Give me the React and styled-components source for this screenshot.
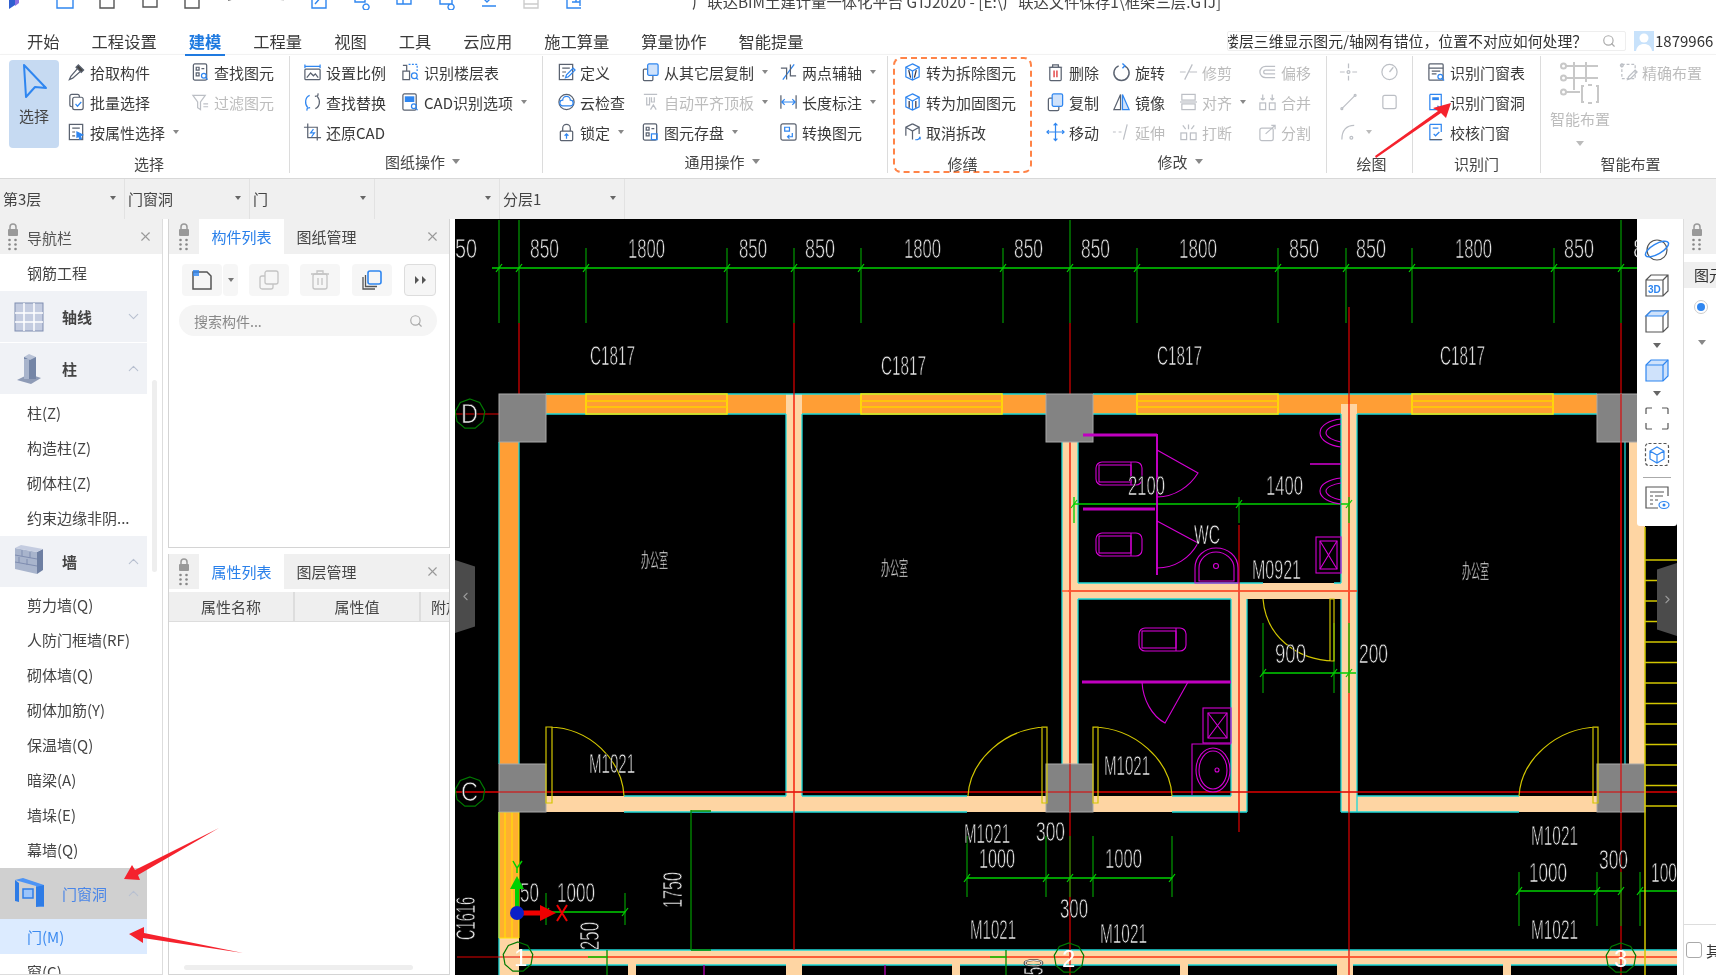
import React from 'react';
import styled, { createGlobalStyle } from 'styled-components';
import { X, ChevronDown, ChevronUp, ChevronLeft, ChevronRight, Search } from 'lucide-react';

const FONT = '"Noto Sans CJK SC", "Liberation Sans", sans-serif';
const BLUE = '#2f86f0';
const B = BLUE;

const Global = createGlobalStyle`
  html, body { margin: 0; padding: 0; background: #fff; }
  body { font-family: ${FONT}; font-size: 15px; color: #333; }
`;

const Page = styled.div`
  position: relative; width: 1716px; height: 979px; overflow: hidden; background: #fff; filter: blur(.3px);
`;

/* ---------- title bar ---------- */
const TitleBar = styled.div`
  display: flex; height: 28px; overflow: hidden; align-items: flex-start;
`;
const Logo = styled.svg`width: 12px; height: 20px; margin: -10px 0 0 8px;`;
const QuickBar = styled.div`display: flex; gap: 22.4px; margin-left: 35px; width: 637px;`;
const QuickIcon = styled.svg`
  width: 20px; height: 20px; margin-top: -10px; fill: none;
  stroke: ${p => (p.$muted ? '#ccc' : p.$blue ? BLUE : '#555')}; stroke-width: 1.4;
`;
const TitleText = styled.div`
  margin-top: -9px; font-size: 15.35px; line-height: 20px; white-space: nowrap; color: #444;
`;

/* ---------- tabs ---------- */
const TabRow = styled.div`display: flex; height: 26px; padding-left: 27px; align-items: center; position: relative;`;
const TabList = styled.div`display: flex; gap: 32px; width: 1200px;`;
const Tab = styled.div`
  position: relative; font-size: 16.3px; line-height: 22px; white-space: nowrap;
  color: ${p => (p.$active ? '#1f7ae0' : '#3a3a3a')};
  font-weight: ${p => (p.$active ? 700 : 400)};
  &::after {
    content: ''; display: ${p => (p.$active ? 'block' : 'none')};
    position: absolute; left: -4px; right: -4px; bottom: -4px; height: 2.5px; background: #1f7ae0;
  }
`;
const HelpSearch = styled.div`
  display: flex; align-items: center; width: 399px; height: 20px; overflow: hidden;
  box-sizing: border-box; border: 1px solid #eee; border-radius: 2px; flex: none;
`;
const HelpText = styled.span`
  margin-left: -4px; white-space: nowrap; font-size: 14.9px; line-height: 18px; color: #333; flex: none;
`;
const HelpIcon = styled(Search)`margin-left: 15px; flex: none; color: #aaa;`;
const Avatar = styled.div`
  width: 20px; height: 20px; margin-left: 8px; background: #c8e2fb; flex: none; overflow: hidden;
`;
const UserId = styled.span`white-space: nowrap; font-size: 15px; line-height: 20px; margin-left: 1px; flex: none;`;

/* ---------- ribbon ---------- */
const Ribbon = styled.div`
  display: flex; height: 125px; box-sizing: border-box; border-top: 1px solid #f2f2f2;
  border-bottom: 1px solid #d8d8d8; box-shadow: 0 1px 2px rgba(0,0,0,.06);
`;
const Group = styled.div`
  display: flex; flex-direction: column; box-sizing: border-box; flex: none;
  width: ${p => p.$w}px; height: 117px; margin-top: 1px; padding: 1px 0 0 ${p => p.$pad || 0}px;
  border-right: ${p => (p.$sep ? '1px solid #dcdcdc' : 'none')};
`;
const RepairFrame = styled.div`
  display: flex; flex-direction: column; box-sizing: border-box; flex: none;
  width: 139px; height: 116px; margin: 2px 9px 0 5px; padding: 0 0 0 8px;
  border: 2px dashed #ff8347; border-radius: 8px;
`;
const GroupBody = styled.div`display: flex; height: 92px; flex: none; margin-top: ${p => p.$lift || 0}px;`;
const Col = styled.div`
  display: grid; grid-template-rows: repeat(3, 30.2px); width: ${p => p.$w}px; flex: none;
`;
const Item = styled.div`
  display: flex; align-items: center; gap: 4px; white-space: nowrap; font-size: 15px;
  color: ${p => (p.$muted ? '#bcbcbc' : '#3a3a3a')};
`;
const Glyph = styled.svg`
  width: 19px; height: 20px; flex: none; fill: none; stroke-width: 1.3;
  stroke: #5a6270; opacity: ${p => (p.$muted ? 0.4 : 1)};
`;
const Caret = styled.i`
  display: inline-block; width: 0; height: 0; flex: none;
  margin-left: ${p => (p.$m === undefined ? 4 : p.$m)}px;
  border-left: ${p => p.$s || 3}px solid transparent; border-right: ${p => p.$s || 3}px solid transparent;
  border-top: ${p => (p.$s || 3) + 1}px solid ${p => p.$c || '#888'};
`;
const GroupLabel = styled.div`
  display: flex; align-items: center; justify-content: center; height: 24px; flex: none;
  font-size: 15px; color: #444; margin-left: ${p => p.$shift || 0}px; margin-top: ${p => (p.$low ? 2 : 0)}px;
`;
const BigButton = styled.div`
  display: flex; flex-direction: column; align-items: center; box-sizing: border-box;
  width: 50px; height: 88px; margin: 3px 8px 0 0; padding-top: 3px; border-radius: 4px;
  background: #c6daf2; font-size: 15px; color: #444; flex: none;
`;
const BigArrow = styled.svg`width: 28px; height: 36px; margin-bottom: 6px;`;
const SmartBig = styled.div`
  display: flex; flex-direction: column; align-items: center; width: 62px; margin-right: 8px;
  color: #bcbcbc; font-size: 15px; flex: none; padding-top: 5px;
`;
const SmartIcon = styled.svg`width: 40px; height: 42px; fill: none; stroke: #c8c8c8; stroke-width: 2; margin-bottom: 4px;`;
const SmartCaret = styled(Caret)`margin-top: 12px;`;

/* ---------- selects ---------- */
const SelectBar = styled.div`display: flex; height: 40px; background: #f0f0f0;`;
const SelectCell = styled.div`
  display: flex; align-items: center; box-sizing: border-box;
  width: 125px; padding: 0 8px 2px 3px; border-right: 1px solid #e2e2e2; font-size: 15px; color: #444;
`;
const SelectCaret = styled(Caret)`margin-left: auto;`;

/* ---------- workspace ---------- */
const Workspace = styled.div`display: flex; height: 756px;`;
const NavPanel = styled.div`
  position: relative; flex: none; width: 163px; box-sizing: border-box; overflow: hidden;
  border-right: 1.5px solid #ddd; border-bottom: 1.5px solid #ddd; margin-right: 5px;
`;
const PanelHead = styled.div`
  display: flex; align-items: stretch; height: 35px; background: #f0f0f0; flex: none; position: relative;
`;
const LockCell = styled.div`
  width: ${p => p.$w || 30}px; flex: none; display: flex; justify-content: center; align-items: center;
`;
const LockSvg = styled.svg`width: 12px; height: 29px;`;
const NavTitle = styled.div`line-height: 37px; font-size: 15px; color: #555; margin-left: 1px;`;
const HeadTab = styled.div`
  width: ${p => p.$w}px; flex: none; text-align: center; line-height: 36px; font-size: 15px;
  background: ${p => (p.$active ? '#fff' : 'transparent')};
  color: ${p => (p.$active ? '#2a80ea' : '#444')};
`;
const CloseBtn = styled(X)`margin: 10px 9px 0 auto; color: #999; flex: none;`;
const PlainRow = styled.div`
  display: flex; align-items: center; height: ${p => p.$h || 35}px; padding-left: 27px; width: 147px;
  box-sizing: border-box; font-size: 15px; white-space: nowrap; color: ${p => (p.$sel ? '#3d8bf0' : '#444')};
  background: ${p => (p.$sel ? '#dcebff' : 'transparent')};
`;
const Section = styled.div`
  display: flex; align-items: center; width: 147px; height: 51px; box-sizing: border-box; padding-left: 14px;
  background: ${p => (p.$on ? '#d0d0d0' : '#f0f2f6')}; margin-top: ${p => p.$mt || 0}px; margin-bottom: ${p => p.$mb || 0}px;
  font-size: 15px; font-weight: ${p => (p.$on ? 400 : 700)}; color: ${p => (p.$on ? '#4a86e8' : '#444')};
`;
const SectionIcon = styled.svg`width: 30px; height: 32px; margin-right: 18px; flex: none;`;
const Chevron = styled.span`margin-left: auto; margin-right: 5px; display: flex; color: #b8c0d0;`;
const ScrollThumb = styled.div`
  position: absolute; left: 152px; top: 161px; width: 5px; height: 192px; border-radius: 3px; background: #eee;
`;
const MidColumn = styled.div`display: flex; flex-direction: column; gap: 6px; width: 282px; flex: none; margin-right: 5px;`;
const DockPanel = styled.div`
  position: relative; display: flex; flex-direction: column; box-sizing: border-box; overflow: hidden;
  height: ${p => p.$h}px; border: 1px solid #d4d4d4; border-top: none;
`;
const Toolbar = styled.div`display: flex; padding: 10px 0 0 13px; height: 41px; box-sizing: content-box;`;
const ToolBtn = styled.div`
  display: flex; align-items: center; justify-content: center; width: ${p => p.$w || 40}px; height: 32px;
  margin-left: ${p => p.$m || 0}px; background: #f6f6f6; border-radius: 4px; box-sizing: border-box;
  border: ${p => (p.$border ? '1px solid #ddd' : 'none')};
`;
const ToolGlyph = styled.svg`width: 22px; height: 22px; fill: none; stroke: ${p => (p.$muted ? '#c4c4c4' : '#555')}; stroke-width: 1.3;`;
const ComponentSearch = styled.div`
  display: flex; align-items: center; justify-content: space-between; box-sizing: border-box;
  width: 258px; height: 31px; margin: 0 0 0 10px; padding: 0 14px 0 15px; border-radius: 16px;
  background: #f5f5f5; color: #888; font-size: 14px;
`;
const SearchGlyph = styled(Search)`color: #aaa;`;
const TableHead = styled.div`
  display: grid; grid-template-columns: 126px 126px 1fr; height: 29px; margin-top: 3px;
  background: #efefef; border-bottom: 1px solid #ddd; font-size: 15px; color: #444;
`;
const HeadCell = styled.div`
  line-height: 29px; text-align: center; border-right: 2px solid #ddd; overflow: hidden; white-space: nowrap;
  &:last-child { border-right: none; text-align: left; padding-left: 10px; }
`;
const HScroll = styled.div`
  position: absolute; left: 15px; bottom: 4px; width: 229px; height: 5px; border-radius: 3px; background: #eee;
`;

/* ---------- canvas ---------- */
const CanvasWrap = styled.div`position: relative; width: 1222px; height: 756px; flex: none; overflow: hidden; background: #000;`;
const Drawing = styled.svg`
  display: block;
  text { font-family: "Liberation Sans", sans-serif; font-size: 28px; fill: #e8e8e8; stroke: #000; stroke-width: .75; }
  .room { font-family: ${FONT}; font-size: 20px; stroke-width: .5; }
  .num { fill: #fff; stroke: none; font-size: 24px; }
`;
const SideTools = styled.div`
  position: absolute; right: 0; top: 0; width: 40px; height: 307px; background: #fff; border-radius: 0 0 3px 3px;
  display: flex; flex-direction: column; align-items: center; padding-top: 18px; box-sizing: border-box;
`;
const SideGlyph = styled.svg`
  width: 26px; height: 25px; flex: none; margin-bottom: ${p => p.$mb || 0}px; fill: none; stroke: #555; stroke-width: 1.2;
`;
const SideCaret = styled(Caret)`margin: ${p => p.$mt}px 0 ${p => p.$mb}px 0;`;
const SideRule = styled.div`width: 28px; height: 1px; background: #aaa; margin-bottom: 7px; flex: none;`;
const Handle = styled.div`
  position: absolute; top: ${p => p.$top}px; ${p => p.$side}: 0; width: 20px; height: 73px;
  background: #4b4b4b; color: #999; display: flex; align-items: center; justify-content: center;
  clip-path: ${p => (p.$side === 'left'
    ? 'polygon(0 0, 100% 9%, 100% 91%, 0 100%)'
    : 'polygon(0 9%, 100% 0, 100% 100%, 0 91%)')};
`;

/* ---------- right panel ---------- */
const RightPanel = styled.div`
  display: flex; flex-direction: column; position: relative; margin-left: 6px; flex: 1; overflow: hidden;
  border-left: 1.5px solid #ddd;
`;
const RightTab = styled.div`
  height: 26px; margin-top: 8px; background: #efefef; font-size: 15px; line-height: 26px; padding-left: 10px; white-space: nowrap;
`;
const Radio = styled.div`
  width: 14px; height: 14px; border: 1.5px solid #ccc; border-radius: 50%; margin: 12px 0 0 10px;
  display: flex; align-items: center; justify-content: center; box-sizing: border-box;
  &::after { content: ''; width: 8px; height: 8px; border-radius: 50%; background: ${BLUE}; }
`;
const RightCaret = styled(Caret)`margin: 26px 0 0 14px;`;
const RightFoot = styled.div`
  display: flex; align-items: center; margin-top: auto; height: 50px; border-top: 1.5px solid #ddd; padding-left: 2px; margin-bottom: 0;
  font-size: 15px; white-space: nowrap;
`;
const Check = styled.div`width: 16px; height: 16px; border: 1.5px solid #aaa; border-radius: 3px; margin-right: 4px; flex: none; box-sizing: border-box;`;

const AnnotationLayer = styled.svg`position: absolute; left: 0; top: 0; width: 1716px; height: 979px; pointer-events: none;`;

/* ---------- ribbon glyphs ---------- */
const ICONS = {
  pick: <><path d="M12 2.5l5.5 5.5-2.5 2.5L9.500 5z" fill="#444" /><path d="M11 6.500L4 14.500l-1.500 3.500 3.500-1.500 8-7" /></>,
  batch: <><rect x="3" y="2" width="10" height="13" rx="2" /><rect x="6" y="5" width="11" height="13" rx="2" fill="#fff" /><path stroke={B} d="M9 12l2 2.500 4-4.500" /></>,
  attr: <><rect x="2.500" y="2" width="14" height="16" /><path d="M5.500 6h8M5.500 10h3M5.500 14h3" /><path fill={B} stroke={B} d="M10.500 10l6 3-2.500 1 1 3-1.500 .5-1-3-2 1z" /></>,
  find: <><rect x="2.500" y="1.500" width="14" height="17" rx="1.500" /><path d="M5.500 5h3v3h-3zM11 6.500h3M5.500 11h3v3h-3z" /><circle cx="13.500" cy="14" r="2.500" stroke={B} /><path stroke={B} d="M15.500 16l2 2" /></>,
  filter: <><path d="M2 3h13l-5 7v8l-3-2v-6z" /><path d="M13 12h5M13 15h5" /></>,
  scale: <><path stroke={B} d="M2 2v4M18 2v4M2 4h16" /><rect x="2" y="7" width="16" height="11" rx="1" /><path d="M4 16l4-5 3 3 2-2 3 4" /></>,
  floor: <><path stroke={B} d="M8 2h9v7" strokeDasharray="2 1.500" /><path d="M2 9h7v9H2zM2 3h4v6" /><circle cx="14" cy="14" r="3" stroke={B} /><path stroke={B} d="M16 16l2 2" /></>,
  swap: <><path stroke={B} d="M7 3C2 5 1.500 12 5 16" /><path d="M13 17c5-2 5.500-9 2-13" /><path stroke={B} d="M7.500 16l-3 .5L4 19" /><path d="M12.500 4l3-.5L16 1" /></>,
  cad: <><rect x="2" y="1.500" width="14" height="17" rx="1.500" /><rect x="4" y="4" width="10" height="6" fill={B} stroke="none" /><circle cx="13.500" cy="14.500" r="2.500" stroke={B} /><path stroke={B} d="M15.500 16.500l2 2" /></>,
  restore: <><path d="M5 1v15h14M1 5h14v14" /><path stroke={B} d="M11 7l-3 4h4l-3 4" /></>,
  define: <><rect x="2.500" y="2" width="14" height="16" /><path d="M5.500 6h8M5.500 10h4M5.500 14h2" /><path stroke={B} d="M9 16l1-3 7-7 2 2-7 7z" /></>,
  cloud: <><circle cx="10" cy="10" r="8" /><path stroke={B} d="M6 14a3 3 0 0 1 0-6 4 4 0 0 1 8 0 3 3 0 0 1 0 6z" /></>,
  lock: <><path d="M6 9V6a4 4 0 0 1 8 0v3" /><rect x="3.500" y="9" width="13" height="10" rx="1" /><path stroke={B} d="M10 17v-5M8 14l2-2 2 2" /></>,
  copyFloor: <><rect x="2.500" y="7" width="10" height="12" rx="1" /><rect x="7" y="1.500" width="11" height="12" rx="1.500" fill="#cfe2fb" stroke={B} /></>,
  auto: <><path d="M3 2h14M6 5v8h3V5M11 5v5h3V5M10 18l3-5 3 5" /></>,
  store: <><rect x="2.500" y="1.500" width="14" height="17" rx="1.500" /><path d="M5.500 5h3v3h-3zM11 6.500h3M5.500 11h3v3h-3z" /><rect x="11" y="12" width="6" height="6" stroke={B} /></>,
  twoPoint: <><path stroke={B} d="M4 18L16 2" /><path d="M2 6h6v12M12 2v12h6" /></>,
  length: <><path d="M2 3v14M18 3v14" /><path stroke={B} d="M3 10h14M6 7l-3 3 3 3M14 7l3 3-3 3" /></>,
  convert: <><rect x="2" y="1.500" width="16" height="17" rx="2" /><path stroke={B} d="M6 5h5v4H6zM14 11v4H9M11 13l-2 2 2 2" /></>,
  demolish: <><path d="M10 1.500l7 3.500v10l-7 3.500L3 15V5z" stroke={B} /><path stroke={B} d="M3 5l7 4 7-4M10 9v9.500" /><path stroke="#334" d="M6 8l2 8M14 8l-2 8" /></>,
  reinforce: <><path d="M10 1.500l7 3.500v10l-7 3.500L3 15V5z" stroke={B} /><path stroke={B} d="M3 5l7 4 7-4M10 9v9.500" /><path stroke="#334" d="M6.500 9v7M13.500 9v7" /></>,
  cancel: <><path d="M10 1.500l7 3.500v7M3 14V5l7-3.500M3 5l7 4 7-4M10 9v9" /><path stroke={B} d="M13 18a4 4 0 0 0 5-3M18 15l0 3" /></>,
  del: <><path d="M3 5h14M7 5V2.500h6V5" /><rect x="4" y="5" width="12" height="14" rx="1" /><path stroke="#e34242" strokeWidth="1.5" d="M8.500 8.500v7M11.500 8.500v7" /></>,
  rotate: <><path d="M13 3.500a8 8 0 1 1-6 0" strokeWidth="1.500" /><path stroke={B} strokeWidth="1.500" d="M11 1l2.500 2.500L11 6" /></>,
  copy: <><rect x="2.500" y="6" width="11" height="13" rx="1.500" /><rect x="6.500" y="1.500" width="11" height="13" rx="1.500" fill="#cfe2fb" stroke={B} /></>,
  mirror: <><path d="M9 2L2 18h7z" /><path d="M11 2l7 16h-7z" stroke={B} fill="#cfe2fb" /></>,
  move: <><path stroke={B} d="M10 1v18M1 10h18M8 3l2-2 2 2M8 17l2 2 2-2M3 8l-2 2 2 2M17 8l2 2-2 2" /></>,
  trim: <><path d="M14 2L6 18M1 10h6M11 10h8" /></>,
  offset: <><path d="M18 4H8a6 6 0 0 0 0 12h10M18 8H8a2 2 0 0 0 0 4h10" /></>,
  extend: <><path d="M1 10h3M7 10h3M16 2l-4 16" /></>,
  align: <><rect x="3" y="2" width="14" height="6" /><rect x="3" y="12" width="14" height="6" /><path d="M1 10h18" /></>,
  merge: <><rect x="2" y="11" width="6" height="7" /><rect x="12" y="11" width="6" height="7" /><path d="M5 2v6M15 2v6M5 8l-2-2M5 8l2-2M15 8l-2-2M15 8l2-2" /></>,
  breakIt: <><rect x="2" y="11" width="6" height="7" /><rect x="12" y="11" width="6" height="7" /><path d="M4 3l3 4M16 3l-3 4M10 2v5" /></>,
  split: <><rect x="2" y="6" width="14" height="13" rx="2" /><path d="M8 12l10-9M14 3h4v4" /></>,
  point: <><path d="M10 1v5M10 14v5M1 10h5M14 10h5" /><circle cx="10" cy="10" r="1.500" /></>,
  dial: <><circle cx="10" cy="10" r="8" /><path d="M10 10l4-5" /></>,
  line: <><path d="M3 17L17 3" /><circle cx="3" cy="17" r="1" /><circle cx="17" cy="3" r="1" /></>,
  square: <><rect x="3" y="3" width="14" height="14" rx="2" /></>,
  arc: <><path d="M3 18C3 8 8 3 16 3" /><circle cx="13" cy="16" r="1.500" /></>,
  recTable: <><rect x="2" y="1.500" width="15" height="17" rx="1" /><path d="M2 6h15M5 9h9M5 12h5" /><circle cx="14" cy="15" r="2.500" stroke={B} /><path stroke={B} d="M16 17l2 2" /></>,
  recDoor: <><path d="M3 2h12v14M3 2v16h10" stroke={B} /><rect x="5.500" y="5" width="7" height="3" fill={B} stroke="none" /><path stroke={B} d="M11 14l2 2" /></>,
  check: <><path d="M3 2h12v8M3 2v16h12" stroke={B} /><path d="M3 18h13" /><path stroke={B} d="M6 6h6M7 12l2 2 4-4" /></>,
  precise: <><rect x="3" y="2" width="14" height="15" strokeDasharray="3 2" /><circle cx="3" cy="3" r="1.500" /><path d="M9 18l1-3 7-7 2 2-7 7z" /></>,
};

const Ico = ({ n, muted }) => <Glyph viewBox="0 0 20 20" $muted={muted}>{ICONS[n]}</Glyph>;
const Cmd = ({ n, t, muted, caret }) => (
  <Item $muted={muted}><Ico n={n} muted={muted} />{t}{caret && <Caret />}</Item>
);

const BareIcon = ({ n, caret }) => <Item $muted><Ico n={n} muted />{caret && <Caret $c="#bbb" />}</Item>;

const Grip = () => (
  <LockSvg viewBox="0 0 12 29">
    <path d="M3 8V5a3 3 0 0 1 6 0v3" fill="none" stroke="#999" strokeWidth="1.500" />
    <rect x="1" y="7" width="10" height="7" rx="1" fill="#999" />
    <g fill="#888">
      {[18, 22.500, 27].map(y => [2.500, 8.500].map(x => <circle key={x + '-' + y} cx={x} cy={y} r="1.300" />))}
    </g>
  </LockSvg>
);

const QUICK = [
  ['M2 2h16v16H2z', 1], ['M3 2h14v16H3z'], ['M3 5l4-3h10v15H3z'], ['M3 2h14v16H3zM6 2v5h8V2'],
  ['M3 10c4 0 8-3 12-8M15 2v5'], ['M17 10c-4 0-8-3-12-8M5 2v5', 0, 1], ['M3 2h14v16H3zM6 14l7-8', 1], ['M3 2h10v10H3zM14 14a3 3 0 1 0 .1 0', 1],
  ['M3 2h6v12H3zM9 6h8v8H9z', 1], ['M3 2h12v12H3zM14 14a3 3 0 1 0 .1 0', 1], ['M3 16h14M6 10l8-8 2 2-8 8z', 1], ['M3 2h14v16H3zM3 8h14M3 14h14', 0, 1], ['M3 2v16h14M8 8h8v8M12 4v8M8 12h8', 1],
];

const SectionIcons = {
  grid: <><rect x="1" y="2" width="28" height="28" fill="#c4cce0" stroke="#7f8db0" /><path d="M10 2v28M20 2v28M1 12h28M1 21h28" stroke="#fff" strokeWidth="1.500" /></>,
  col: <><path d="M3 27l12-6 12 4-10 6z" fill="#8e9bb6" /><rect x="10" y="4" width="12" height="22" fill="#7485a6" /><path d="M10 4l5-3 7 3-6 3z" fill="#b8c2d6" /><rect x="10" y="6" width="5" height="20" fill="#a8b4cc" /></>,
  wall: <><path d="M1 3l22 4v22L1 24z" fill="#a8b4cc" /><path d="M23 7l6-3v21l-6 4z" fill="#6e7fa2" /><path d="M1 3l6-3 22 4-6 3z" fill="#c4cce0" /><path d="M1 10l22 4M1 17l22 4M8 5v6M16 7v6M5 12v6M13 14v6" stroke="#7f8db0" /></>,
  door: <><path d="M1 3l8-2 21 7v22l-8-1V9z" fill="#4d94f5" /><path d="M5 6v19l-4-1V3zM22 10v20l8-1V8z" fill="#2e7ce6" /><rect x="9" y="12" width="10" height="9" fill="#9ac4fb" stroke="#2e7ce6" strokeWidth="1.500" /></>,
};

/* ---------- drawing data ---------- */
const ORANGE = '#ff9e35', PEACH = '#fed5a3', CYAN = '#1cd8d8', RED = '#e00000', LIME = '#00d000', DK = '#008f00', YEL = '#ffe600', DOOR = '#d2c600', MAG = '#d400d4';

const FILLS = [
  [546, 394, 500, 20, ORANGE], [1093, 394, 504, 20, ORANGE], [499, 442, 20, 322, ORANGE], [499, 812, 20, 126, '#ffb030'],
  [499, 938, 20, 37, PEACH], [786, 394, 16, 402, PEACH], [1062, 442, 16, 322, PEACH], [1341, 404, 16, 408, PEACH],
  [1062, 583, 295, 16, PEACH], [1231, 599, 16, 213, PEACH], [546, 796, 500, 16, PEACH], [1093, 796, 154, 16, PEACH],
  [1341, 796, 256, 16, PEACH], [1629, 442, 16, 322, PEACH], [519, 950, 1158, 15, PEACH], [628, 965, 8, 10, PEACH],
  [786, 965, 16, 10, PEACH], [952, 965, 8, 10, PEACH], [1180, 965, 8, 10, PEACH], [1337, 965, 16, 10, PEACH], [1503, 965, 8, 10, PEACH],
];
const COLUMNS = [[499, 394, 47, 48], [1046, 394, 47, 48], [1597, 394, 48, 48], [499, 764, 47, 48], [1046, 764, 47, 48], [1597, 764, 48, 48]];
const CYANS = [
  'M546 394H1046M1093 394H1597M546 414H786M802 414H1046M1093 414H1341M1357 414H1597', 'M499 442V764M519 442V764M786 414V796M802 414V796',
  'M1062 442V764M1078 442V583M1078 599V796M1341 414V583M1341 599V812M1357 414V812', 'M1078 583H1263M1334 583H1341M1078 599H1231M1231 599V796M1247 599V812',
  'M624 796H786M802 796H967M1172 796H1231M1357 796H1519M624 812H967M1172 812H1247M1341 812H1519', 'M1625 442V764M499 812V975',
  'M519 950H1677M519 965H628M636 965H786M802 965H952M960 965H1180M1188 965H1337M1353 965H1503M1511 965H1677',
];
const REDS = ['M519 323V394M794 323V950M1070 323V394M1349 307V975M1621 323V975M1239 525V832M1070 812V975', 'M455 414H499M455 792H1677M457 957H1677M1068 591H1357', 'M1070 442V764'];
const TICKS = [586, 727, 794, 861, 1003, 1137, 1278, 1346, 1412, 1554];
const DIMS_DK = [
  'M691 810V950M691 811H711M691 950H711M546 893V925M625 893V925M1239 497V523M1263 623V693M1334 623V693', 'M967 836V897M1046 836V897M1070 836V897M1093 836V897M1172 836V897',
  'M1519 872V926M1597 872V926M1621 872V926M1640 872V926', 'M607 950V975M1006 950V975',
];
const DIMS_LT = [
  'M492 268H1637', 'M546 912H625', 'M967 878H1172', 'M1519 891H1621M1640 891H1677', 'M1074 504H1349M1074 497V523M1349 497V523', 'M1263 673H1356M1349 623V693', 'M588 957H607M990 957H1006',
];
const SLASHES = [[499, 268], [519, 268], [586, 268], [727, 268], [794, 268], [861, 268], [1003, 268], [1070, 268], [1137, 268], [1278, 268], [1346, 268], [1412, 268], [1554, 268], [1621, 268], [546, 912], [625, 912], [967, 878], [1046, 878], [1070, 878], [1093, 878], [1172, 878], [1519, 891], [1597, 891], [1621, 891], [1640, 891], [1074, 504], [1239, 504], [1349, 504], [1263, 673], [1334, 673], [1349, 673]];
const LABELS = [
  ['50', 455, 477, 258], ['850', 530, 559, 258], ['1800', 628, 665, 258], ['850', 739, 767, 258], ['850', 805, 835, 258], ['1800', 904, 941, 258], ['850', 1014, 1043, 258],
  ['850', 1081, 1110, 258], ['1800', 1179, 1217, 258], ['850', 1289, 1319, 258], ['850', 1356, 1386, 258], ['1800', 1455, 1492, 258], ['850', 1564, 1594, 258], ['8', 1633, 1645, 258],
  ['C1817', 590, 635, 365], ['C1817', 881, 926, 375], ['C1817', 1157, 1202, 365], ['C1817', 1440, 1485, 365],
  ['2100', 1128, 1165, 495], ['1400', 1266, 1303, 495], ['WC', 1194, 1220, 544], ['M0921', 1252, 1301, 579], ['900', 1275, 1306, 663], ['200', 1359, 1388, 663],
  ['M1021', 589, 635, 773], ['M1021', 1104, 1150, 775], ['M1021', 964, 1010, 843], ['300', 1036, 1065, 841], ['1000', 979, 1015, 868], ['1000', 1105, 1142, 868], ['300', 1060, 1088, 918],
  ['M1021', 970, 1016, 939], ['M1021', 1100, 1147, 943], ['M1021', 1531, 1578, 845], ['1000', 1529, 1567, 882], ['300', 1599, 1628, 869], ['100', 1651, 1677, 882], ['M1021', 1531, 1578, 939],
  ['50', 520, 539, 902], ['1000', 557, 595, 902],
];
const VERTICALS = [['1750', 682, 908, 36], ['C1616', 475, 940, 43], ['250', 599, 950, 28], ['50', 1043, 975, 16]];
const ROOMS = [[641, 568], [881, 576], [1462, 579]];
const YELLOW_RUNGS = Array.from({ length: 13 }, (_, i) => 560 + i * 20.5);
const WINDOWS = [586, 861, 1137, 1412];

const Octagon = ({ cx, cy, r = 15 }) => {
  const pts = Array.from({ length: 9 }, (_, i) => {
    const a = (Math.PI * 2 * i) / 9 - Math.PI / 2;
    return `${cx + r * Math.cos(a)},${cy + r * Math.sin(a)}`;
  }).join(' ');
  return <polygon points={pts} fill="none" stroke="#007a00" strokeWidth="1.200" />;
};

const Plan = () => (
  <Drawing width="1222" height="756" viewBox="455 219 1222 756">
    {FILLS.map((f, i) => <rect key={i} x={f[0]} y={f[1]} width={f[2]} height={f[3]} fill={f[4]} />)}
    <path d={CYANS.join('')} stroke={CYAN} strokeWidth="1.300" fill="none" />
    {WINDOWS.map(x => (
      <g key={x} stroke={YEL} strokeWidth="1.500" fill="none">
        <rect x={x} y="394" width="141" height="20" />
        <path d={`M${x} 401H${x + 141}M${x} 407H${x + 141}`} stroke="#ffd000" />
      </g>
    ))}
    <path d="M499 812V938M505 812V938M512 812V938M519 812V938M499 812H519M499 938H519" stroke={YEL} strokeWidth="1" fill="none" />
    <path d={REDS.join('')} stroke={RED} strokeWidth="1.200" fill="none" />
    <path d="M794 396V796M1070 442V764M1349 404V812M1239 599V812" stroke="#ff4a2a" strokeWidth="1.200" fill="none" />
    <path d="M519 957H1677M1062 591H1357" stroke="#ff5a30" strokeWidth="1.300" fill="none" />
    {COLUMNS.map((c, i) => <rect key={i} x={c[0]} y={c[1]} width={c[2]} height={c[3]} fill="#838383" stroke="#a9a9a9" />)}
    <path d="M1621 394V812M1070 764V812M455 792H1677" stroke={RED} strokeWidth="1.100" fill="none" />

    {/* dimension lines */}
    <path d="M499 220V323M519 220V323M1070 220V323M1621 220V323" stroke={DK} strokeWidth="1.300" />
    {TICKS.map(x => <path key={x} d={`M${x} 248V323`} stroke={DK} strokeWidth="1.300" />)}
    <path d={DIMS_DK.join('')} stroke={DK} strokeWidth="1.300" fill="none" />
    <path d={DIMS_LT.join('')} stroke={LIME} strokeWidth="1.300" fill="none" />
    {SLASHES.map(([x, y], i) => <path key={i} d={`M${x - 3} ${y + 4}L${x + 3} ${y - 4}`} stroke={LIME} strokeWidth="1.200" />)}

    {/* doors */}
    <g fill="none" stroke={DOOR} strokeWidth="1.200">
      <path d="M546 727H552V803H546ZM549 727C590 728 622 760 624 796" />
      <path d="M1042 727H1047V803H1042ZM1047 727C1005 728 970 760 968 796" />
      <path d="M1093 727H1098V803H1093ZM1093 727C1135 728 1170 760 1172 796" />
      <path d="M1593 727H1598V803H1593ZM1598 727C1556 728 1521 760 1519 796" />
      <path d="M1330 599V661H1334V599ZM1334 661C1296 660 1266 636 1263 599" />
    </g>
    <path d="M1645 527V975" stroke={DOOR} strokeWidth="1.500" />
    {YELLOW_RUNGS.map(y => <path key={y} d={`M1645 ${y}H1677`} stroke={DOOR} strokeWidth="1.500" />)}

    {/* fixtures */}
    <g fill="none" stroke={MAG} strokeWidth="1.100">
      <path d="M1083 435H1157V575" strokeWidth="1.800" />
      <path d="M1083 435H1157M1083 509H1155M1082 682H1231" strokeWidth="3" stroke="#c000c0" />
      <path d="M1157 450L1198 473C1190 486 1175 497 1157 497M1157 521L1198 543C1190 558 1175 568 1157 568" />
      <rect x="1096" y="462" width="46" height="23" rx="6" /><rect x="1099" y="465" width="32" height="17" /><path d="M1131 462V485" />
      <rect x="1096" y="533" width="46" height="23" rx="6" /><rect x="1099" y="536" width="32" height="17" /><path d="M1131 533V556" />
      <rect x="1139" y="628" width="47" height="23" rx="6" /><rect x="1142" y="631" width="34" height="17" /><path d="M1176 628V651" />
      <path d="M1341 419C1330 420 1320 425 1320 433C1320 440 1330 446 1341 447M1341 424C1334 425 1326 428 1326 433C1326 437 1334 441 1341 442" />
      <path d="M1341 478C1330 479 1320 484 1320 491C1320 498 1330 503 1341 504M1341 483C1334 484 1326 487 1326 491C1326 495 1334 499 1341 500" />
      <path d="M1310 464H1341" strokeWidth="1.500" />
      <path d="M1195 583V568C1195 556 1205 548 1216 548C1228 548 1238 556 1238 568V583Z" /><path d="M1199 581V568C1199 559 1207 552 1216 552C1225 552 1234 559 1234 568V581Z" /><circle cx="1216" cy="566" r="2.500" />
      <rect x="1316" y="537" width="25" height="36" /><rect x="1320" y="541" width="17" height="28" /><path d="M1320 541L1337 569M1337 541L1320 569" />
      <path d="M1142 682C1143 700 1152 716 1165 723L1188 682" />
      <rect x="1203" y="708" width="28" height="35" /><rect x="1208" y="713" width="19" height="25" /><path d="M1208 713L1227 738M1227 713L1208 738" />
      <path d="M1192 795V744H1231" /><ellipse cx="1213" cy="770" rx="17" ry="22" /><ellipse cx="1213" cy="770" rx="14" ry="19" /><circle cx="1217" cy="770" r="2" />
      <path d="M704 965V975M885 965V975" stroke="#9a009a" strokeWidth="1.500" />
    </g>

    {/* axis bubbles */}
    <Octagon cx={470} cy={414} /><Octagon cx={470} cy={792} /><Octagon cx={518} cy={957} /><Octagon cx={1069} cy={958} /><Octagon cx={1621} cy={958} />
    <text x="461" y="423" textLength="17" lengthAdjust="spacingAndGlyphs">D</text>
    <text x="461" y="801" textLength="17" lengthAdjust="spacingAndGlyphs">C</text>
    <text className="num" x="514" y="966">1</text>
    <text className="num" x="1062" y="967">2</text>
    <text className="num" x="1614" y="967">3</text>

    {LABELS.map(([t, a, b, y], i) => <text key={i} x={a} y={y} textLength={b - a} lengthAdjust="spacingAndGlyphs">{t}</text>)}
    {VERTICALS.map(([t, x, y, l], i) => (
      <text key={i} transform={`translate(${x} ${y}) rotate(-90)`} textLength={l} lengthAdjust="spacingAndGlyphs">{t}</text>
    ))}
    {ROOMS.map(([x, y]) => <text key={x} className="room" x={x} y={y} textLength="27" lengthAdjust="spacingAndGlyphs">办公室</text>)}

    {/* UCS marker */}
    <path d="M517 913V885" stroke="#00d000" strokeWidth="4" /><path d="M510 889L517 876L524 889Z" fill="#00d000" />
    <path d="M517 913H545" stroke="#f00000" strokeWidth="5" /><path d="M540 905L556 913L540 921Z" fill="#f00000" />
    <circle cx="517" cy="913" r="7" fill="#0a1fc8" />
    <path d="M513 861L517 868L522 861M517 868V873" stroke="#00d000" strokeWidth="1.500" fill="none" />
    <path d="M557 905L567 921M567 905L557 921" stroke="#f00000" strokeWidth="2" />
  </Drawing>
);

const NavItems1 = ['柱(Z)', '构造柱(Z)', '砌体柱(Z)', '约束边缘非阴...'];
const NavItems2 = ['剪力墙(Q)', '人防门框墙(RF)', '砌体墙(Q)', '砌体加筋(Y)', '保温墙(Q)', '暗梁(A)', '墙垛(E)', '幕墙(Q)'];
const TABS = ['开始', '工程设置', '建模', '工程量', '视图', '工具', '云应用', '施工算量', '算量协作', '智能提量'];
const SELECTS = ['第3层', '门窗洞', '门', '', '分层1'];

const SectionRow = ({ icon, title, up, on, mb, mt }) => (
  <Section $on={on} $mb={mb} $mt={mt}>
    <SectionIcon viewBox="0 0 30 32">{SectionIcons[icon]}</SectionIcon>
    {title}
    <Chevron>{up ? <ChevronUp size={17} strokeWidth={1.500} /> : <ChevronDown size={17} strokeWidth={1.500} />}</Chevron>
  </Section>
);

export default function App() {
  return (
    <Page>
      <Global />
      <TitleBar>
        <Logo viewBox="0 0 12 20"><path d="M1 1h6v14L1 19z" fill="#2f5fd0" /><path d="M7 4h4v9l-4 3z" fill="#8b6fe0" /></Logo>
        <QuickBar>
          {QUICK.map(([d, blue, muted], i) => (
            <QuickIcon key={i} viewBox="0 0 20 20" $blue={blue} $muted={muted}><path d={d} /></QuickIcon>
          ))}
        </QuickBar>
        <TitleText>广联达BIM土建计量一体化平台 GTJ2020 - [E:\广联达文件保存1\框架三层.GTJ]</TitleText>
      </TitleBar>

      <TabRow>
        <TabList>{TABS.map(t => <Tab key={t} $active={t === '建模'}>{t}</Tab>)}</TabList>
        <HelpSearch>
          <HelpText>楼层三维显示图元/轴网有错位，位置不对应如何处理？</HelpText>
          <HelpIcon size={14} strokeWidth={2} />
        </HelpSearch>
        <Avatar>
          <svg viewBox="0 0 20 20" width="20" height="20"><circle cx="10" cy="7" r="4.500" fill="#fff" /><path d="M2 20c1-6 5-7 8-7s7 1 8 7z" fill="#fff" /></svg>
        </Avatar>
        <UserId>1879966</UserId>
      </TabRow>

      <Ribbon>
        <Group $w={290} $pad={9} $sep>
          <GroupBody>
            <BigButton>
              <BigArrow viewBox="0 0 28 36"><path d="M4 2L26 25L15 24L6 34Z" fill="none" stroke="#2f86f0" strokeWidth="2" strokeLinejoin="round" /></BigArrow>
              选择
            </BigButton>
            <Col $w={124}>
              <Cmd n="pick" t="拾取构件" /><Cmd n="batch" t="批量选择" /><Cmd n="attr" t="按属性选择" caret />
            </Col>
            <Col $w={95}>
              <Cmd n="find" t="查找图元" /><Cmd n="filter" t="过滤图元" muted />
            </Col>
          </GroupBody>
          <GroupLabel $low>选择</GroupLabel>
        </Group>

        <Group $w={253} $pad={13} $sep>
          <GroupBody>
            <Col $w={98}>
              <Cmd n="scale" t="设置比例" /><Cmd n="swap" t="查找替换" /><Cmd n="restore" t="还原CAD" />
            </Col>
            <Col $w={140}>
              <Cmd n="floor" t="识别楼层表" /><Cmd n="cad" t="CAD识别选项" caret />
            </Col>
          </GroupBody>
          <GroupLabel>图纸操作<Caret $m={7} $s={4} /></GroupLabel>
        </Group>

        <Group $w={345} $pad={14} $sep>
          <GroupBody>
            <Col $w={84}>
              <Cmd n="define" t="定义" /><Cmd n="cloud" t="云检查" /><Cmd n="lock" t="锁定" caret />
            </Col>
            <Col $w={138}>
              <Cmd n="copyFloor" t="从其它层复制" caret /><Cmd n="auto" t="自动平齐顶板" muted caret /><Cmd n="store" t="图元存盘" caret />
            </Col>
            <Col $w={105}>
              <Cmd n="twoPoint" t="两点辅轴" caret /><Cmd n="length" t="长度标注" caret /><Cmd n="convert" t="转换图元" />
            </Col>
          </GroupBody>
          <GroupLabel>通用操作<Caret $m={7} $s={4} /></GroupLabel>
        </Group>

        <RepairFrame>
          <GroupBody $lift={-2}>
            <Col $w={125}>
              <Cmd n="demolish" t="转为拆除图元" /><Cmd n="reinforce" t="转为加固图元" /><Cmd n="cancel" t="取消拆改" />
            </Col>
          </GroupBody>
          <GroupLabel $shift={-8} $low>修缮</GroupLabel>
        </RepairFrame>

        <Group $w={286} $pad={5} $sep>
          <GroupBody>
            <Col $w={66}><Cmd n="del" t="删除" /><Cmd n="copy" t="复制" /><Cmd n="move" t="移动" /></Col>
            <Col $w={67}><Cmd n="rotate" t="旋转" /><Cmd n="mirror" t="镜像" /><Cmd n="extend" t="延伸" muted /></Col>
            <Col $w={79}><Cmd n="trim" t="修剪" muted /><Cmd n="align" t="对齐" muted caret /><Cmd n="breakIt" t="打断" muted /></Col>
            <Col $w={65}><Cmd n="offset" t="偏移" muted /><Cmd n="merge" t="合并" muted /><Cmd n="split" t="分割" muted /></Col>
          </GroupBody>
          <GroupLabel $shift={-12}>修改<Caret $m={7} $s={4} /></GroupLabel>
        </Group>

        <Group $w={86} $pad={12} $sep>
          <GroupBody>
            <Col $w={41}><BareIcon n="point" /><BareIcon n="line" /><BareIcon n="arc" caret /></Col>
            <Col $w={30}><BareIcon n="dial" /><BareIcon n="square" /></Col>
          </GroupBody>
          <GroupLabel $shift={-8} $low>绘图</GroupLabel>
        </Group>

        <Group $w={128} $pad={14} $sep>
          <GroupBody>
            <Col $w={110}><Cmd n="recTable" t="识别门窗表" /><Cmd n="recDoor" t="识别门窗洞" /><Cmd n="check" t="校核门窗" /></Col>
          </GroupBody>
          <GroupLabel $shift={-14} $low>识别门</GroupLabel>
        </Group>

        <Group $w={175} $pad={8}>
          <GroupBody>
            <SmartBig>
              <SmartIcon viewBox="0 0 40 42">
                <path d="M14 0V28M26 0V20M6 4H38M6 16H38M6 30H20" /><circle cx="3.500" cy="4" r="2.500" /><circle cx="3.500" cy="16" r="2.500" /><circle cx="3.500" cy="30" r="2.500" />
                <path d="M24 24h-2v16h2M36 24h2v16h-2M28 23h4M28 41h4" />
              </SmartIcon>
              智能布置
              <SmartCaret $m={0} $s={4} $c="#bbb" />
            </SmartBig>
            <Col $w={95}><Cmd n="precise" t="精确布置" muted /></Col>
          </GroupBody>
          <GroupLabel $shift={-4} $low>智能布置</GroupLabel>
        </Group>
      </Ribbon>

      <SelectBar>
        {SELECTS.map((s, i) => <SelectCell key={i}>{s}<SelectCaret $c="#666" /></SelectCell>)}
      </SelectBar>

      <Workspace>
        <NavPanel>
          <PanelHead>
            <LockCell $w={26}><Grip /></LockCell>
            <NavTitle>导航栏</NavTitle>
            <CloseBtn size={15} strokeWidth={1.800} />
          </PanelHead>
          <PlainRow $h={37}>钢筋工程</PlainRow>
          <SectionRow icon="grid" title="轴线" mb={1} />
          <SectionRow icon="col" title="柱" up mb={0.500} />
          {NavItems1.map(t => <PlainRow key={t}>{t}</PlainRow>)}
          <SectionRow icon="wall" title="墙" up mt={1} />
          {NavItems2.map(t => <PlainRow key={t}>{t}</PlainRow>)}
          <SectionRow icon="door" title="门窗洞" up on mt={1} />
          <PlainRow $sel>门(M)</PlainRow>
          <PlainRow>窗(C)</PlainRow>
          <ScrollThumb />
        </NavPanel>

        <MidColumn>
          <DockPanel $h={329}>
            <PanelHead>
              <LockCell><Grip /></LockCell>
              <HeadTab $w={85} $active>构件列表</HeadTab>
              <HeadTab $w={85}>图纸管理</HeadTab>
              <CloseBtn size={15} strokeWidth={1.800} />
            </PanelHead>
            <Toolbar>
              <ToolBtn>
                <ToolGlyph viewBox="0 0 22 22"><path d="M2 3h14l4 4v13H2z" strokeWidth="1.500" /><rect x="2" y="1" width="6" height="6" fill={BLUE} stroke="none" opacity=".8" /></ToolGlyph>
              </ToolBtn>
              <ToolBtn $w={15} $m={1}><Caret $m={0} $c="#777" /></ToolBtn>
              <ToolBtn $m={11}>
                <ToolGlyph viewBox="0 0 22 22" $muted><rect x="2" y="7" width="13" height="13" rx="2" /><rect x="7" y="2" width="13" height="13" rx="2" fill="#f6f6f6" /></ToolGlyph>
              </ToolBtn>
              <ToolBtn $m={11}>
                <ToolGlyph viewBox="0 0 22 22" $muted><path d="M2 5h18M8 5V2h6v3" /><rect x="4" y="5" width="14" height="15" rx="2" /><path d="M9 9v7M13 9v7" /></ToolGlyph>
              </ToolBtn>
              <ToolBtn $m={12}>
                <ToolGlyph viewBox="0 0 22 22"><path d="M2 8v12h12M4.500 6v11.500H16" /><rect x="7" y="2" width="13" height="13" rx="2" stroke={BLUE} strokeWidth="1.600" /></ToolGlyph>
              </ToolBtn>
              <ToolBtn $w={32} $m={12} $border>
                <ToolGlyph viewBox="0 0 22 22"><path d="M6 7l4 4-4 4zM13 7l4 4-4 4z" fill="#555" stroke="none" /></ToolGlyph>
              </ToolBtn>
            </Toolbar>
            <ComponentSearch>搜索构件...<SearchGlyph size={14} strokeWidth={2} /></ComponentSearch>
          </DockPanel>
          <DockPanel $h={421}>
            <PanelHead>
              <LockCell><Grip /></LockCell>
              <HeadTab $w={85} $active>属性列表</HeadTab>
              <HeadTab $w={85}>图层管理</HeadTab>
              <CloseBtn size={15} strokeWidth={1.800} />
            </PanelHead>
            <TableHead>
              <HeadCell>属性名称</HeadCell><HeadCell>属性值</HeadCell><HeadCell>附加</HeadCell>
            </TableHead>
            <HScroll />
          </DockPanel>
        </MidColumn>

        <CanvasWrap>
          <Plan />
          <Handle $side="left" $top={341}><ChevronLeft size={13} /></Handle>
          <Handle $side="right" $top={344}><ChevronRight size={13} /></Handle>
          <SideTools>
            <SideGlyph viewBox="0 0 26 25" $mb={11}>
              <circle cx="13" cy="13" r="10" /><ellipse cx="13" cy="12" rx="13" ry="5" transform="rotate(-30 13 12)" stroke={BLUE} strokeWidth="1.500" />
            </SideGlyph>
            <SideGlyph viewBox="0 0 26 25" $mb={11}>
              <path d="M2 7l5-5h17v16l-5 5H2zM2 7h17v16M19 7l5-5" />
              <text x="4" y="20" fontSize="10" fontWeight="700" fill={BLUE} stroke="none" fontFamily="Liberation Sans">3D</text>
            </SideGlyph>
            <SideGlyph viewBox="0 0 26 25" $mb={0}>
              <path d="M2 7l5-5h17v16l-5 5H2zM19 7v16" /><path d="M2 7l5-5h17l-5 5z" fill="#cfe2fb" stroke={BLUE} />
            </SideGlyph>
            <SideCaret $mt={9} $mb={10} $m={0} $s={4} $c="#666" />
            <SideGlyph viewBox="0 0 26 25" $mb={0}>
              <path d="M2 7l5-5h17v16l-5 5H2z" fill="#cfe2fb" stroke={BLUE} /><path d="M2 7h17v16M19 7l5-5" stroke={BLUE} />
            </SideGlyph>
            <SideCaret $mt={8} $mb={10} $m={0} $s={4} $c="#666" />
            <SideGlyph viewBox="0 0 26 25" $mb={11}>
              <path d="M2 8V3a1 1 0 0 1 1-1h5M18 2h5a1 1 0 0 1 1 1v5M24 17v5a1 1 0 0 1-1 1h-5M8 23H3a1 1 0 0 1-1-1v-5" />
            </SideGlyph>
            <SideGlyph viewBox="0 0 26 25" $mb={10}>
              <rect x="1.500" y="1.500" width="23" height="22" rx="3" strokeDasharray="3 2" />
              <path d="M13 5l7 4v8l-7 4-7-4V9zM6 9l7 4 7-4M13 13v8" stroke={BLUE} />
            </SideGlyph>
            <SideRule />
            <SideGlyph viewBox="0 0 26 25">
              <path d="M24 11V2H2v21h12" /><path d="M6 7h14M6 11h3M11 11h8M6 15h3M11 15h3M6 19h3" />
              <ellipse cx="20" cy="20" rx="5" ry="3.500" stroke={BLUE} /><circle cx="20" cy="20" r="1.500" fill={BLUE} stroke="none" />
            </SideGlyph>
          </SideTools>
        </CanvasWrap>

        <RightPanel>
          <PanelHead>
            <LockCell $w={26}><Grip /></LockCell>
          </PanelHead>
          <RightTab>图元</RightTab>
          <Radio />
          <RightCaret $c="#888" $s={4} />
          <RightFoot><Check />其他</RightFoot>
        </RightPanel>
      </Workspace>

      <AnnotationLayer viewBox="0 0 1716 979">
        <g fill="#f5222d">
          <polygon points="1376,158 1375,156 1438,111 1433,108 1451,103 1446,118 1441,113" />
          <polygon points="219,828 135,870 132,865 124,879 140,880 138,875" />
          <polygon points="243,953 144,933 144,927 129,934 143,943 143,938" />
        </g>
      </AnnotationLayer>
    </Page>
  );
}
